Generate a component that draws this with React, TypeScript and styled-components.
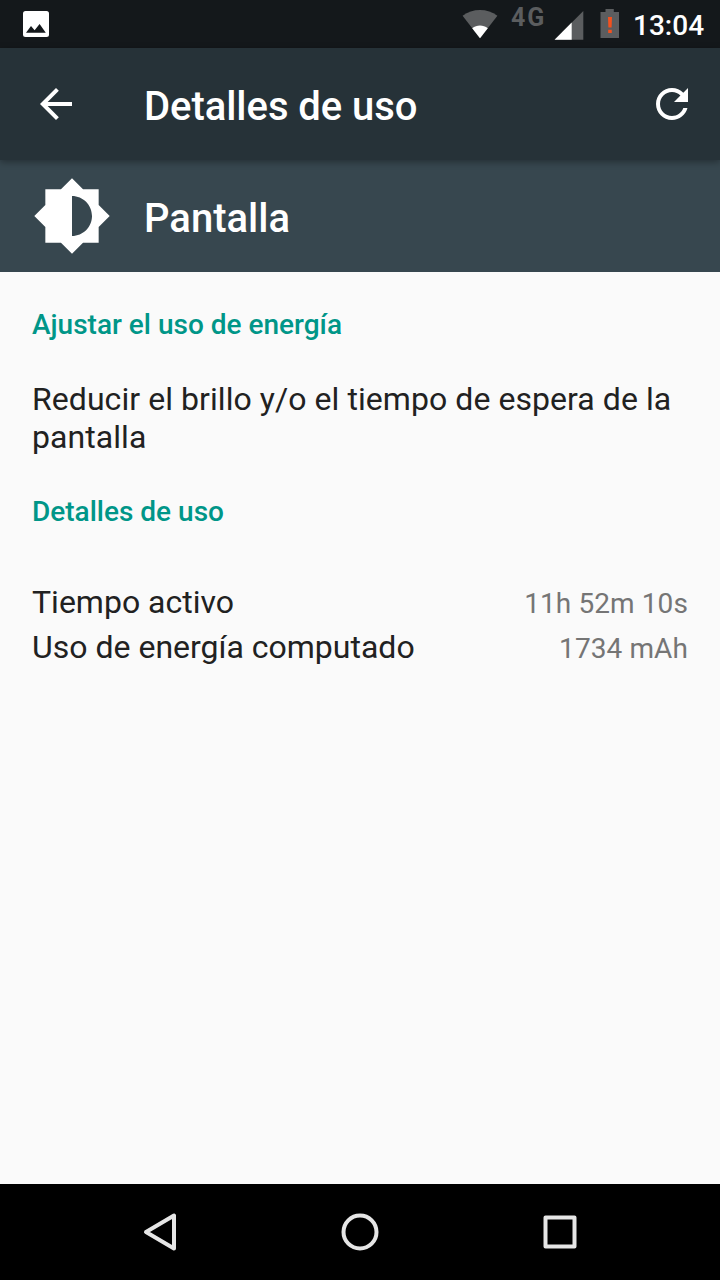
import React from 'react';
import styled, { createGlobalStyle } from 'styled-components';

const GlobalStyle = createGlobalStyle`
  * {
    box-sizing: border-box;
  }

  body {
    margin: 0;
    font-family: Roboto, 'Noto Sans', sans-serif;
  }

  svg {
    display: block;
    flex-shrink: 0;
  }
`;

const Screen = styled.div`
  width: 720px;
  height: 1280px;
  display: flex;
  flex-direction: column;
  background-color: #fafafa;
  overflow: hidden;
`;

const StatusBar = styled.div`
  height: 48px;
  flex-shrink: 0;
  display: flex;
  align-items: flex-start;
  justify-content: space-between;
  padding: 0 16px 0 22px;
  background-color: #14181b;
  color: #fff;
`;

const StatusIcons = styled.div`
  display: flex;
  align-items: flex-start;
`;

const NetworkType = styled.span`
  width: 36px;
  margin: 3px 7px 0 13px;
  font-size: 25px;
  line-height: 29px;
  font-weight: 700;
  letter-spacing: 2px;
  color: #5b5d5f;
`;

const BatterySlot = styled.div`
  margin-left: 16px;
`;

const Clock = styled.span`
  width: 71px;
  margin: 9px 0 0 13px;
  font-size: 28px;
  line-height: 33px;
  font-weight: 500;
  text-align: right;
  white-space: nowrap;
`;

const Toolbar = styled.header`
  height: 112px;
  flex-shrink: 0;
  display: flex;
  align-items: center;
  padding: 0 24px 0 32px;
  background-color: #263238;
  box-shadow: 0 2px 7px rgba(0, 0, 0, 0.35);
  z-index: 1;
`;

const IconButton = styled.button`
  width: 48px;
  height: 48px;
  padding: 0;
  border: 0;
  background: none;
  color: #fff;
`;

const Title = styled.h1`
  flex: 1;
  margin: 5px 0 0 64px;
  font-size: 40px;
  line-height: 47px;
  font-weight: 500;
  letter-spacing: -0.05px;
  color: #fff;
`;

const AppHeader = styled.section`
  height: 112px;
  flex-shrink: 0;
  display: flex;
  align-items: center;
  padding: 0 32px;
  background-color: #37474f;
`;

const AppName = styled.h2`
  margin: 5px 0 0 32px;
  font-size: 40px;
  line-height: 47px;
  font-weight: 500;
  color: #fff;
`;

const Content = styled.main`
  flex: 1;
  padding: 36px 32px 0;
  color: #212121;
`;

const Category = styled.h3`
  margin: 0;
  font-size: 28px;
  line-height: 33px;
  font-weight: 500;
  color: #009688;
`;

const Suggestion = styled.p`
  margin: 39px 0;
  font-size: 32px;
  line-height: 38px;
  letter-spacing: 0.06px;
`;

const DetailList = styled.dl`
  margin: 55px 0 0;
`;

const DetailRow = styled.div`
  height: 45px;
  display: flex;
  align-items: baseline;
  justify-content: space-between;
`;

const DetailLabel = styled.dt`
  font-size: 32px;
  line-height: 38px;
`;

const DetailValue = styled.dd`
  margin: 0;
  font-size: 28px;
  line-height: 33px;
  letter-spacing: 0.1px;
  color: #757575;
`;

const NavBar = styled.nav`
  height: 96px;
  flex-shrink: 0;
  display: grid;
  grid-template-columns: repeat(3, 200px);
  align-items: center;
  justify-content: center;
  justify-items: center;
  background-color: #000;
`;

const NavIcon = styled.svg`
  width: 48px;
  height: 48px;
  fill: none;
  stroke: #e6e6e6;
  stroke-width: 4;
  stroke-linejoin: round;
`;

const details = [
  { label: 'Tiempo activo', value: '11h 52m 10s' },
  { label: 'Uso de energía computado', value: '1734 mAh' },
];

const PictureIcon = () => (
  <svg width="28" height="48" viewBox="0 0 28 48">
    <rect x="1" y="11" width="26" height="26" rx="2.5" fill="#fff" />
    <path d="M4 32.7 9 26l3.6 4.2L17.6 24l6.2 8.7z" fill="#14181b" />
  </svg>
);

const WifiIcon = () => (
  <svg width="36" height="48" viewBox="0 0 36 48">
    <path d="M.6 15.8C5.6 12 11.6 10 18 10s12.4 2 17.4 5.8L18 38.3z" fill="#5b5d5f" />
    <path d="M10.2 28.2C12.5 26.5 15.2 25.6 18 25.6s5.5.9 7.8 2.6L18 38.3z" fill="#fff" />
  </svg>
);

const SignalIcon = () => (
  <svg width="30" height="48" viewBox="0 0 30 48">
    <path d="M.6 39.7 29.3 11v28.7z" fill="#5b5d5f" />
    <path d="M.6 39.7 17.7 22.6v17.1z" fill="#fff" />
  </svg>
);

const BatteryIcon = () => (
  <svg width="20" height="48" viewBox="0 0 20 48">
    <path d="M.5 12h5V9h8.300v3h5.200v26H.5z" fill="#5b5d5f" />
    <path d="M8 17h4l-.4 10.500H8.400zM8.200 29.800h3.600V33H8.200z" fill="#f4511e" />
  </svg>
);

const App = () => {
  return (
    <>
      <GlobalStyle />
      <Screen>
        <StatusBar>
          <PictureIcon />
          <StatusIcons>
            <WifiIcon />
            <NetworkType>4G</NetworkType>
            <SignalIcon />
            <BatterySlot>
              <BatteryIcon />
            </BatterySlot>
            <Clock>13:04</Clock>
          </StatusIcons>
        </StatusBar>

        <Toolbar>
          <IconButton aria-label="Atrás">
            <svg width="48" height="48" viewBox="0 0 24 24" fill="currentColor">
              <path d="M20 11H7.830l5.590-5.590L12 4l-8 8 8 8 1.410-1.410L7.830 13H20v-2z" />
            </svg>
          </IconButton>
          <Title>Detalles de uso</Title>
          <IconButton aria-label="Actualizar">
            <svg width="48" height="48" viewBox="0 0 24 24" fill="currentColor">
              <path d="M17.650 6.350C16.200 4.900 14.210 4 12 4c-4.420 0-7.990 3.580-7.990 8s3.570 8 7.990 8c3.730 0 6.840-2.550 7.730-6h-2.080c-.82 2.330-3.040 4-5.650 4-3.310 0-6-2.690-6-6s2.690-6 6-6c1.660 0 3.140.69 4.220 1.780L13 11h7V4l-2.350 2.350z" />
            </svg>
          </IconButton>
        </Toolbar>

        <AppHeader>
          <svg width="80" height="80" viewBox="0 0 24 24" fill="#fff">
            <path d="M20 15.310L23.310 12 20 8.690V4h-4.690L12 .69 8.690 4H4v4.690L.69 12 4 15.310V20h4.690L12 23.310 15.310 20H20v-4.690zM12 18V6c3.310 0 6 2.690 6 6s-2.690 6-6 6z" />
          </svg>
          <AppName>Pantalla</AppName>
        </AppHeader>

        <Content>
          <Category>Ajustar el uso de energía</Category>
          <Suggestion>Reducir el brillo y/o el tiempo de espera de la pantalla</Suggestion>
          <Category>Detalles de uso</Category>
          <DetailList>
            {details.map(({ label, value }) => (
              <DetailRow key={label}>
                <DetailLabel>{label}</DetailLabel>
                <DetailValue>{value}</DetailValue>
              </DetailRow>
            ))}
          </DetailList>
        </Content>

        <NavBar>
          <NavIcon viewBox="0 0 48 48">
            <path d="M10 24 38 7.500v33z" />
          </NavIcon>
          <NavIcon viewBox="0 0 48 48">
            <circle cx="24" cy="24" r="16.500" />
          </NavIcon>
          <NavIcon viewBox="0 0 48 48">
            <rect x="9.500" y="9.500" width="29" height="29" />
          </NavIcon>
        </NavBar>
      </Screen>
    </>
  );
};

export default App;
